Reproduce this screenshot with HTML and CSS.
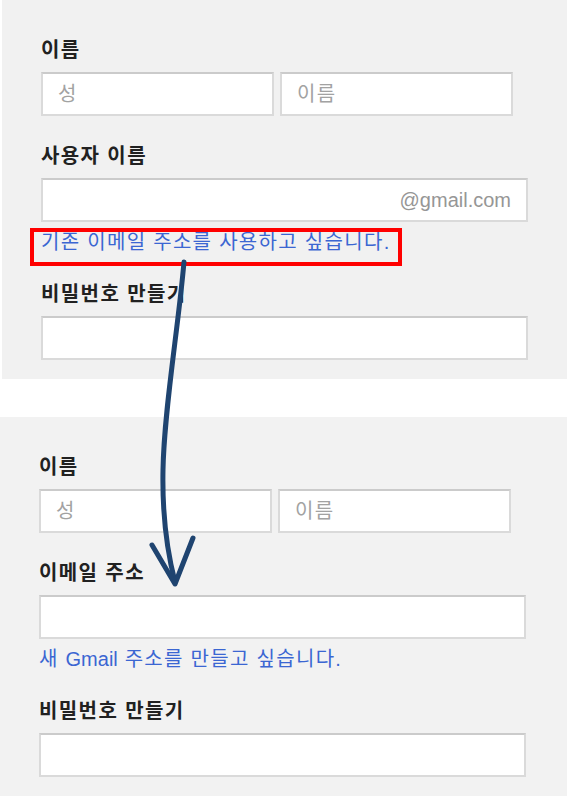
FILE: index.html
```html
<!DOCTYPE html>
<html lang="ko">
<head>
<meta charset="utf-8">
<title>Gmail 가입 양식 비교</title>
<link rel="stylesheet" href="styles.css">
</head>
<body>
<div class="page">
  <section class="panel panel-top">
    <div class="field">
      <div class="label">이름</div>
      <div class="name-row">
        <div class="input"><span class="ph">성</span></div>
        <div class="input"><span class="ph">이름</span></div>
      </div>
    </div>
    <div class="field">
      <div class="label">사용자 이름</div>
      <div class="input input-full input-suffix"><span class="suffix">@gmail.com</span></div>
      <div class="link-row">
        <a class="link">기존 이메일 주소를 사용하고 싶습니다.</a>
        <span class="annot"></span>
      </div>
    </div>
    <div class="field field-pw">
      <div class="label">비밀번호 만들기</div>
      <div class="input input-full"></div>
    </div>
  </section>

  <section class="panel panel-bottom">
    <div class="field">
      <div class="label">이름</div>
      <div class="name-row">
        <div class="input"><span class="ph">성</span></div>
        <div class="input"><span class="ph">이름</span></div>
      </div>
    </div>
    <div class="field">
      <div class="label">이메일 주소</div>
      <div class="input input-full"></div>
      <div class="link-row">
        <a class="link">새 <span class="latin">Gmail</span> 주소를 만들고 싶습니다.</a>
      </div>
    </div>
    <div class="field field-pw">
      <div class="label">비밀번호 만들기</div>
      <div class="input input-full"></div>
    </div>
  </section>

  <svg class="arrow" width="567" height="796" viewBox="0 0 567 796" aria-hidden="true">
    <path d="M184 262 C178 330 164 410 163 470 C162 520 168 555 175 582" />
    <path d="M152 545 L175 584 L193 538" />
  </svg>
</div>
</body>
</html>
```
FILE: styles.css
```css
html, body {
  margin: 0;
  padding: 0;
  background: #ffffff;
}

body {
  font-family: "Liberation Sans", "Noto Sans CJK KR", sans-serif;
  color: #212121;
}

.page {
  position: relative;
  width: 567px;
  height: 796px;
  overflow: hidden;
}

.panel {
  background: #f1f1f1;
  box-sizing: border-box;
  height: 379px;
  padding: 38px 0 0 39px;
  display: flex;
  flex-direction: column;
}

.panel-top {
  margin-left: 2px;
  width: 565px;
}

.panel-bottom {
  margin-top: 38px;
  width: 567px;
  background: #f2f2f2;
}

.field {
  display: flex;
  flex-direction: column;
}

.field + .field {
  margin-top: 28px;
}

.field.field-pw {
  margin-top: 28px;
}

.label {
  font-size: 20px;
  line-height: 24px;
  font-weight: bold;
  letter-spacing: 1.4px;
  color: #212121;
  margin-bottom: 10px;
}

.name-row {
  display: grid;
  grid-template-columns: 233px 233px;
  column-gap: 6px;
}

.input {
  box-sizing: border-box;
  height: 44px;
  background: #ffffff;
  border: 2px solid #dadada;
  border-top-color: #cbcbcb;
  display: flex;
  align-items: center;
  padding: 0 15px;
}

.input-full {
  width: 487px;
}

.input-suffix {
  justify-content: flex-end;
}

.ph {
  font-size: 20px;
  color: #a2a2a2;
  line-height: 24px;
  letter-spacing: 1.4px;
}

.suffix {
  font-size: 20px;
  color: #969696;
  line-height: 24px;
}

.link-row {
  position: relative;
  margin-top: 8px;
  height: 24px;
}

.link {
  font-size: 20px;
  line-height: 24px;
  letter-spacing: 1.3px;
  color: #3b66d2;
  white-space: nowrap;
}

.latin {
  letter-spacing: 0;
}

.annot {
  position: absolute;
  left: -11px;
  top: -2px;
  width: 372px;
  height: 38px;
  box-sizing: border-box;
  border: 4px solid #ff0000;
}

.arrow {
  position: absolute;
  left: 0;
  top: 0;
  pointer-events: none;
}

.arrow path {
  fill: none;
  stroke: #1f4470;
  stroke-width: 5;
  stroke-linecap: round;
  stroke-linejoin: round;
}
```
